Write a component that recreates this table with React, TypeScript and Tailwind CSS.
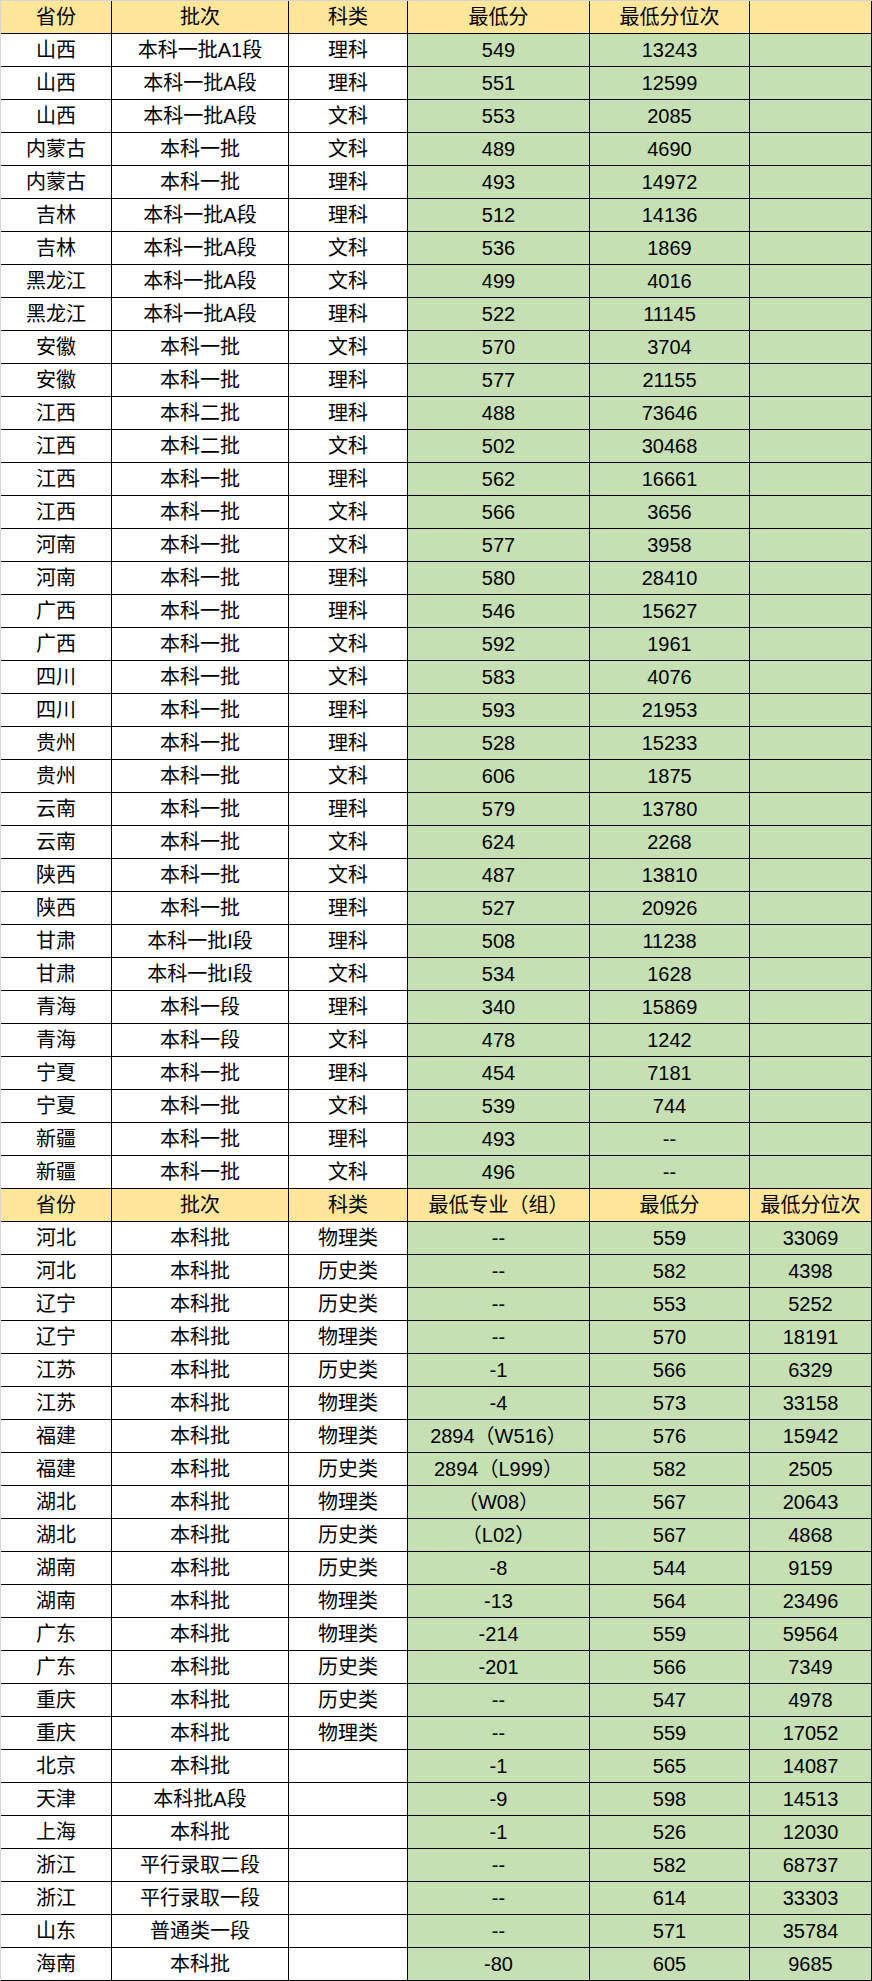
const cols = ['w-[111px]', 'w-[177px]', 'w-[119px]', 'w-[182px]', 'w-[160px]', 'w-[122px]'];

type Row = string[];

const head1: Row = ['省份', '批次', '科类', '最低分', '最低分位次', ''];
const table1: Row[] = [
  ['山西', '本科一批A1段', '理科', '549', '13243', ''],
  ['山西', '本科一批A段', '理科', '551', '12599', ''],
  ['山西', '本科一批A段', '文科', '553', '2085', ''],
  ['内蒙古', '本科一批', '文科', '489', '4690', ''],
  ['内蒙古', '本科一批', '理科', '493', '14972', ''],
  ['吉林', '本科一批A段', '理科', '512', '14136', ''],
  ['吉林', '本科一批A段', '文科', '536', '1869', ''],
  ['黑龙江', '本科一批A段', '文科', '499', '4016', ''],
  ['黑龙江', '本科一批A段', '理科', '522', '11145', ''],
  ['安徽', '本科一批', '文科', '570', '3704', ''],
  ['安徽', '本科一批', '理科', '577', '21155', ''],
  ['江西', '本科二批', '理科', '488', '73646', ''],
  ['江西', '本科二批', '文科', '502', '30468', ''],
  ['江西', '本科一批', '理科', '562', '16661', ''],
  ['江西', '本科一批', '文科', '566', '3656', ''],
  ['河南', '本科一批', '文科', '577', '3958', ''],
  ['河南', '本科一批', '理科', '580', '28410', ''],
  ['广西', '本科一批', '理科', '546', '15627', ''],
  ['广西', '本科一批', '文科', '592', '1961', ''],
  ['四川', '本科一批', '文科', '583', '4076', ''],
  ['四川', '本科一批', '理科', '593', '21953', ''],
  ['贵州', '本科一批', '理科', '528', '15233', ''],
  ['贵州', '本科一批', '文科', '606', '1875', ''],
  ['云南', '本科一批', '理科', '579', '13780', ''],
  ['云南', '本科一批', '文科', '624', '2268', ''],
  ['陕西', '本科一批', '文科', '487', '13810', ''],
  ['陕西', '本科一批', '理科', '527', '20926', ''],
  ['甘肃', '本科一批I段', '理科', '508', '11238', ''],
  ['甘肃', '本科一批I段', '文科', '534', '1628', ''],
  ['青海', '本科一段', '理科', '340', '15869', ''],
  ['青海', '本科一段', '文科', '478', '1242', ''],
  ['宁夏', '本科一批', '理科', '454', '7181', ''],
  ['宁夏', '本科一批', '文科', '539', '744', ''],
  ['新疆', '本科一批', '理科', '493', '--', ''],
  ['新疆', '本科一批', '文科', '496', '--', ''],
];

const head2: Row = ['省份', '批次', '科类', '最低专业（组）', '最低分', '最低分位次'];
const table2: Row[] = [
  ['河北', '本科批', '物理类', '--', '559', '33069'],
  ['河北', '本科批', '历史类', '--', '582', '4398'],
  ['辽宁', '本科批', '历史类', '--', '553', '5252'],
  ['辽宁', '本科批', '物理类', '--', '570', '18191'],
  ['江苏', '本科批', '历史类', '-1', '566', '6329'],
  ['江苏', '本科批', '物理类', '-4', '573', '33158'],
  ['福建', '本科批', '物理类', '2894（W516）', '576', '15942'],
  ['福建', '本科批', '历史类', '2894（L999）', '582', '2505'],
  ['湖北', '本科批', '物理类', '（W08）', '567', '20643'],
  ['湖北', '本科批', '历史类', '（L02）', '567', '4868'],
  ['湖南', '本科批', '历史类', '-8', '544', '9159'],
  ['湖南', '本科批', '物理类', '-13', '564', '23496'],
  ['广东', '本科批', '物理类', '-214', '559', '59564'],
  ['广东', '本科批', '历史类', '-201', '566', '7349'],
  ['重庆', '本科批', '历史类', '--', '547', '4978'],
  ['重庆', '本科批', '物理类', '--', '559', '17052'],
  ['北京', '本科批', '', '-1', '565', '14087'],
  ['天津', '本科批A段', '', '-9', '598', '14513'],
  ['上海', '本科批', '', '-1', '526', '12030'],
  ['浙江', '平行录取二段', '', '--', '582', '68737'],
  ['浙江', '平行录取一段', '', '--', '614', '33303'],
  ['山东', '普通类一段', '', '--', '571', '35784'],
  ['海南', '本科批', '', '-80', '605', '9685'],
];

function Line({ row, header }: { row: Row; header?: boolean }) {
  return (
    <div className="flex h-[33px]">
      {row.map((c, i) => (
        <div
          key={i}
          className={`${cols[i]} shrink-0 flex items-center justify-center border-r border-b border-black ${
            header ? 'bg-[#ffe699]' : i >= 3 ? 'bg-[#c6e0b4]' : 'bg-white'
          }`}
        >
          {c}
        </div>
      ))}
    </div>
  );
}

export default function App() {
  return (
    <div
      className="w-[872px] border-l border-t border-[#d4d4d4] text-[20px] text-black leading-none"
      style={{ fontFamily: '"Liberation Sans", "Noto Sans CJK SC", sans-serif' }}
    >
      <Line row={head1} header />
      {table1.map((r, i) => <Line key={'a' + i} row={r} />)}
      <Line row={head2} header />
      {table2.map((r, i) => <Line key={'b' + i} row={r} />)}
    </div>
  );
}
